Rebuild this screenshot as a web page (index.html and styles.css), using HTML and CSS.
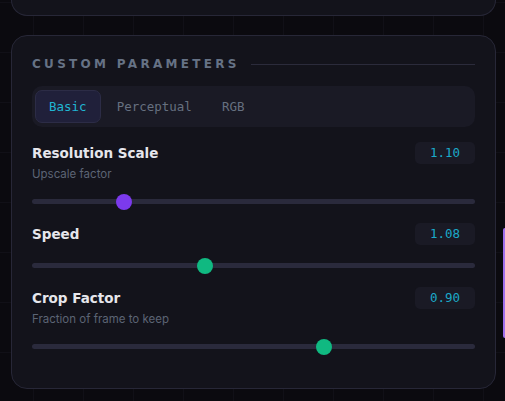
FILE: index.html
```html
<!DOCTYPE html>
<html lang="en">
<head>
  <meta charset="UTF-8">
  <title>Custom Parameters</title>
  <link rel="stylesheet" href="styles.css">
</head>
<body>

  <div class="panel panel-top"></div>

  <div class="panel params">
    <div class="section-title">
      <span>Custom Parameters</span>
      <div class="rule"></div>
    </div>

    <div class="tabs">
      <button class="tab active">Basic</button>
      <button class="tab">Perceptual</button>
      <button class="tab">RGB</button>
    </div>

    <div class="param">
      <div class="param-head">
        <div class="param-name">Resolution Scale</div>
        <div class="param-value">1.10</div>
      </div>
      <div class="param-desc">Upscale factor</div>
      <div class="slider">
        <div class="track"></div>
        <div class="thumb purple" style="left: calc((100% - 16px) * 0.197)"></div>
      </div>
    </div>

    <div class="param">
      <div class="param-head">
        <div class="param-name">Speed</div>
        <div class="param-value">1.08</div>
      </div>
      <div class="slider">
        <div class="track"></div>
        <div class="thumb green" style="left: calc((100% - 16px) * 0.386)"></div>
      </div>
    </div>

    <div class="param">
      <div class="param-head">
        <div class="param-name">Crop Factor</div>
        <div class="param-value">0.90</div>
      </div>
      <div class="param-desc">Fraction of frame to keep</div>
      <div class="slider">
        <div class="track"></div>
        <div class="thumb green" style="left: calc((100% - 16px) * 0.665)"></div>
      </div>
    </div>
  </div>

  <div class="side-tab"></div>

</body>
</html>
```

FILE: styles.css
```css
html {
  background-color: #0b0a0f;
  background-image:
    linear-gradient(to right, #111017 1px, transparent 1px),
    linear-gradient(to bottom, #111017 1px, transparent 1px);
  background-size: 50px 50px;
  background-position: 33px 2px;
}

body {
  margin: 0;
  padding: 0 9px 0 11px;
  font-family: 'Inter', sans-serif;
  color: #e8e8ee;
}

.panel {
  background: #13131b;
  border: 1px solid #272737;
  border-radius: 16px;
}

.panel-top {
  height: 15px;
  border-top: none;
  border-radius: 0 0 16px 16px;
  margin-bottom: 19px;
}

.params {
  padding: 21px 20px 33px 20px;
}

.section-title {
  display: flex;
  align-items: center;
  gap: 11px;
  height: 14px;
}

.section-title span {
  font-family: 'DejaVu Sans', sans-serif;
  font-weight: bold;
  font-size: 12px;
  letter-spacing: 3.3px;
  text-transform: uppercase;
  color: #667285;
  white-space: nowrap;
}

.rule {
  flex: 1;
  height: 1px;
  background: #2b2b3b;
}

.tabs {
  display: flex;
  gap: 2px;
  margin-top: 15px;
  padding: 4px 3px;
  background: #1a1a25;
  border-radius: 10px;
}

.tab {
  font-family: 'DejaVu Sans Mono', monospace;
  font-size: 12.5px;
  height: 33px;
  padding: 0 13px;
  border: 1px solid transparent;
  border-radius: 7px;
  background: none;
  color: #667080;
  cursor: pointer;
}

.tab.active {
  background: #20203a;
  border-color: #2c2c46;
  color: #20b6d3;
}

.param {
  margin-top: 15px;
}

.param + .param {
  margin-top: 13px;
}

.param-head {
  display: flex;
  justify-content: space-between;
  align-items: center;
  height: 22px;
}

.param-name {
  font-family: 'DejaVu Sans', sans-serif;
  font-weight: bold;
  font-size: 13.5px;
  color: #e6e6ec;
}

.param-value {
  width: 60px;
  height: 22px;
  line-height: 22px;
  text-align: center;
  font-family: 'DejaVu Sans Mono', monospace;
  font-size: 12.5px;
  color: #1ba9c9;
  background: #1a1a25;
  border-radius: 5px;
}

.param-desc {
  margin-top: 3px;
  font-size: 11.5px;
  line-height: 14px;
  color: #5c6474;
}

.slider {
  position: relative;
  height: 16px;
  margin-top: 13px;
}

.track {
  position: absolute;
  left: 0;
  right: 0;
  top: 5px;
  height: 5px;
  border-radius: 3px;
  background: #2a2a3c;
}

.thumb {
  position: absolute;
  top: 0;
  width: 16px;
  height: 16px;
  border-radius: 50%;
}

.thumb.purple {
  background: #7c3aed;
}

.thumb.green {
  background: #10b981;
}

.side-tab {
  position: fixed;
  right: 0;
  top: 228px;
  width: 2px;
  height: 110px;
  border-radius: 2px 0 0 2px;
  background: #a070ec;
}
```
